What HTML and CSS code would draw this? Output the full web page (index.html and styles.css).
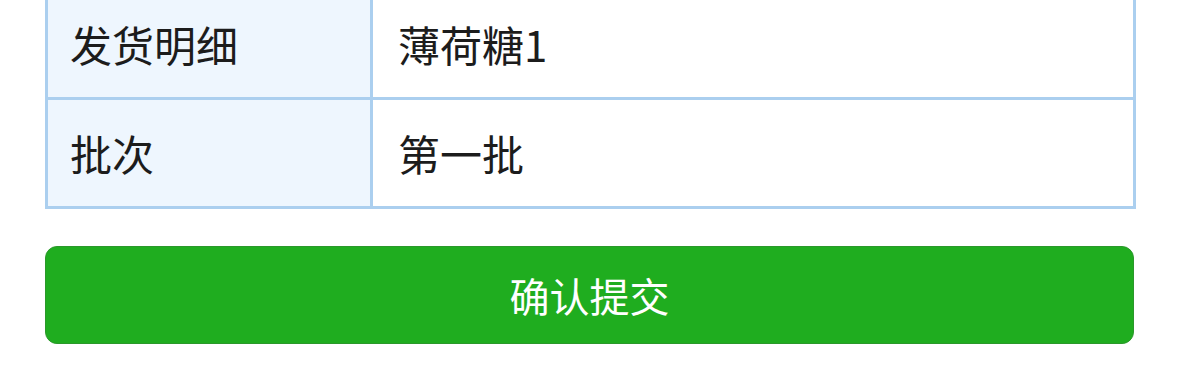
FILE: index.html
```html
<!DOCTYPE html>
<html lang="zh-CN">
<head>
    <meta charset="UTF-8">
    <meta name="viewport" content="width=device-width, initial-scale=1.0">
    <title>发货确认</title>
    <link rel="stylesheet" href="styles.css">
</head>
<body>
    <div class="page">
        <table class="info-table">
            <tr>
                <td class="label">发货明细</td>
                <td class="value">薄荷糖1</td>
            </tr>
            <tr>
                <td class="label">批次</td>
                <td class="value">第一批</td>
            </tr>
        </table>

        <button class="submit-btn" type="button">确认提交</button>
    </div>
</body>
</html>
```

FILE: styles.css
```css
body {
    margin: 0;
    background: #ffffff;
    font-family: "Noto Sans CJK SC", "Noto Sans", sans-serif;
    color: #1c1c1c;
}

.page {
    margin-top: -12px;
    padding: 0 43px 0 45px;
}

.info-table {
    width: 100%;
    border: 3px solid #abcfef;
    border-spacing: 0;
    box-sizing: border-box;
    table-layout: fixed;
}

.info-table td {
    height: 106px;
    padding: 0;
    font-size: 42px;
    font-weight: 400;
    line-height: 1;
    vertical-align: middle;
}

.info-table tr + tr td {
    border-top: 3px solid #abcfef;
}

.label {
    width: 325px;
    padding-left: 22px !important;
    box-sizing: border-box;
    background: #eef6fe;
    border-right: 3px solid #abcfef;
}

.value {
    padding-left: 25px !important;
    background: #ffffff;
}

.submit-btn {
    display: block;
    width: calc(100% - 2px);
    height: 98px;
    margin-top: 37px;
    background: #1fad1f;
    border: 1px solid #2b982b;
    border-radius: 12px;
    color: #ffffff;
    font-family: inherit;
    font-size: 40px;
    cursor: pointer;
}

.submit-btn:hover {
    background: #1ca41c;
}
```
